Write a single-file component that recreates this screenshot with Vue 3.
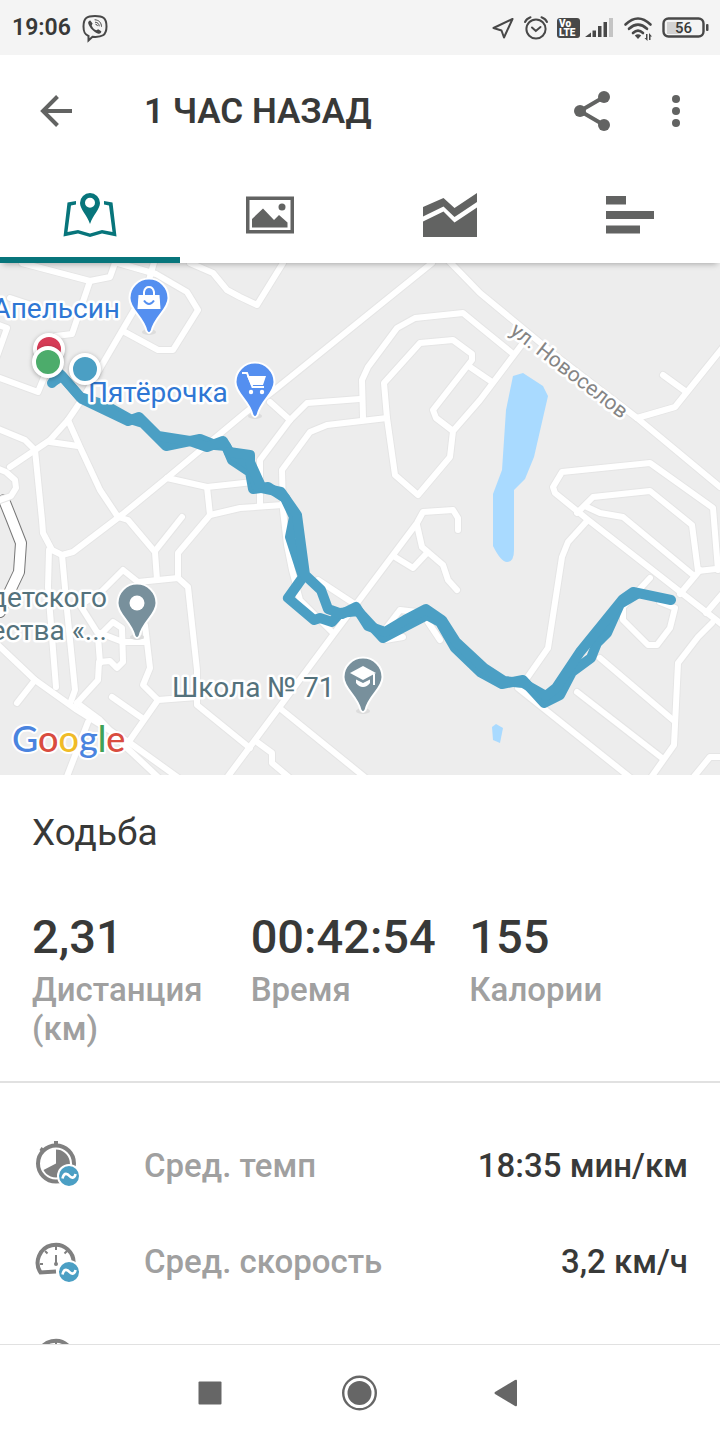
<template>
    <div class="workout">
        <div class="status">
            <div class="status__left">
                <span class="status__time">19:06</span>
                <svg class="status__icon" width="28" height="28" viewBox="0 0 28 28">
                    <path class="line" stroke-width="2" d="M14 2C6 2 2.500 4 2.500 12.500C2.500 18 3.500 20.500 7.500 22V26.500L11.500 22.800C21 23.500 25.500 21.500 25.500 12.500C25.500 4 22 2 14 2Z" />
                    <path class="fill" d="M9.300 6.500L11.600 9.600L10.700 11.600C11.600 14 13 15.300 15.300 16.300L17.200 15.200L20.300 17.300C20.300 19 19 20.200 17.300 19.700C12.500 18 8.600 14 7.200 9.300C6.900 7.900 8 6.700 9.300 6.500Z" />
                    <path class="line" stroke-width="1" d="M14 5.800C18 6 20.300 8.500 20.500 12.300M14.400 8.200C16.800 8.400 18 9.800 18.200 11.900M14.800 10.200Q16.200 10.300 16.400 11.700" />
                </svg>
            </div>
            <div class="status__right">
                <svg class="status__icon" width="24" height="28" viewBox="0 0 24 28">
                    <path class="line" stroke-width="2" stroke-linejoin="round" d="M20.500 5L1.500 14L9.500 16.500L12 23.500Z" />
                </svg>
                <svg class="status__icon" width="28" height="28" viewBox="0 0 28 28">
                    <circle class="line" stroke-width="2" cx="14" cy="15" r="9.600" />
                    <path class="line" stroke-width="2" d="M3 8Q4.500 4.500 8.500 3.200M25 8Q23.500 4.500 19.500 3.200M10 13.500L13.800 17L18.500 13" />
                </svg>
                <svg class="status__icon" width="24" height="28" viewBox="0 0 24 28">
                    <rect class="fill" x="1" y="4" width="23" height="20" rx="3" />
                    <text class="volte" x="3" y="13">Vo</text>
                    <text class="volte" x="3" y="22">LTE</text>
                </svg>
                <svg class="status__icon" width="32" height="28" viewBox="0 0 32 28">
                    <path class="fill" d="M-1 23L5 18.500V23ZM6.500 16.500H10V23H6.500ZM12 12H15.500V23H12ZM17.500 8H21V23H17.500Z" />
                    <rect x="23" y="4" width="4" height="19" fill="#c4c4c4" />
                </svg>
                <svg class="status__icon" width="32" height="28" viewBox="0 0 32 28">
                    <path class="line" stroke-width="2.600" d="M1.500 10.500Q14 -1.500 26.500 10.500M5 14.800Q14 6.600 23 14.800M9 19Q14 14.300 19 19" />
                    <path class="fill" d="M10.800 21.500Q14 18.800 17.200 21.500L14 25ZM22 20H23.500V27L20.500 24H22ZM25 19L28 22.500H26.500V26H25Z" />
                </svg>
                <svg class="status__icon" width="48" height="28" viewBox="0 0 48 28">
                    <rect x="5" y="8" width="14" height="12" fill="#d2d2d2" />
                    <rect class="line" stroke-width="2.400" x="1.500" y="4.500" width="40" height="18" rx="5" />
                    <rect class="fill" x="44" y="10" width="2.500" height="7" rx="1" />
                    <text class="charge" x="21.500" y="19">56</text>
                </svg>
            </div>
        </div>

        <header class="header">
            <button class="icon-button" aria-label="Назад">
                <svg width="48" height="48" viewBox="0 0 48 48">
                    <path d="M40 24H11M25.500 9.500L11 24L25.500 38.500" fill="none" stroke="#626362" stroke-width="4" />
                </svg>
            </button>
            <h1 class="header__title">1 ЧАС НАЗАД</h1>
            <button class="icon-button" aria-label="Поделиться">
                <svg width="48" height="48" viewBox="0 0 48 48">
                    <path d="M36 10L12 24L36 38" fill="none" stroke="#626362" stroke-width="4" />
                    <g fill="#626362">
                        <circle cx="12" cy="24" r="6" />
                        <circle cx="36" cy="10" r="6" />
                        <circle cx="36" cy="38" r="6" />
                    </g>
                </svg>
            </button>
            <button class="icon-button" aria-label="Меню">
                <svg width="48" height="48" viewBox="0 0 48 48" fill="#626362">
                    <circle cx="24" cy="12" r="4" />
                    <circle cx="24" cy="24" r="4" />
                    <circle cx="24" cy="36" r="4" />
                </svg>
            </button>
        </header>

        <nav class="tabs">
            <button
                v-for="tab in tabs"
                :key="tab.id"
                class="tabs__item"
                :class="{ 'tabs__item--active': tab.id === activeTab }"
                :aria-label="tab.label"
                @click="activeTab = tab.id"
            >
                <svg width="56" height="48" viewBox="0 0 56 48" fill="currentColor">
                    <path v-for="d in tab.paths" :key="d" :d="d" fill-rule="evenodd" />
                </svg>
            </button>
        </nav>

        <main class="content">
            <svg class="map" viewBox="0 263 720 512">
                <rect class="map__land" x="0" y="263" width="720" height="512" />
                <path class="map__highway-edge" :d="highway" />
                <path class="map__highway" :d="highway" />
                <polyline v-for="road in roads" :key="'edge' + road" class="map__road-edge" :points="road" />
                <polyline v-for="road in roads" :key="road" class="map__road" :points="road" />
                <g class="map__water">
                    <path d="M513 376L523 373L543 386L548 396L534 457L525 479L514 490V550Q514 562 507 562Q501 562 493 546V494L502 470L506 410Z" />
                    <path d="M492 727L496 724L503 728L500 743L493 740Z" />
                </g>
                <polyline v-for="line in route" :key="line" class="map__route" :points="line" />

                <text class="map__street" transform="translate(509 333) rotate(37.500)">ул. Новоселов</text>
                <text class="map__label map__label--shop" x="120" y="318" text-anchor="end">Апельсин</text>
                <text class="map__label map__label--shop" x="88" y="402">Пятёрочка</text>
                <text class="map__label" x="107" y="607" text-anchor="end">детского</text>
                <text class="map__label" x="107" y="640" text-anchor="end">ества «...</text>
                <text class="map__label" x="172" y="697">Школа № 71</text>

                <g v-for="pin in pins" :key="pin.icon" :transform="`translate(${pin.x} ${pin.y})`">
                    <ellipse cx="0" cy="34" rx="7" ry="3" fill="#dcdcdc" />
                    <path class="map__pin" :fill="pin.color" d="M0 -19.500A19.500 19.500 0 0 0 -19.500 0C-19.500 12 -6 18 -2.500 33Q0 37 2.500 33C6 18 19.500 12 19.500 0A19.500 19.500 0 0 0 0 -19.500Z" />
                    <g v-if="pin.icon === 'bag'">
                        <path d="M-10.500 -3H10.500L11.500 11H-11.500Z" fill="#fff" />
                        <path d="M-5 -2V-6Q-4 -11 0 -11Q4 -11 5 -6V-2" fill="none" stroke="#fff" stroke-width="2" />
                        <path d="M-5 2.500Q0 9.500 5 2.500" fill="none" stroke="#548ff0" stroke-width="2" />
                    </g>
                    <g v-else-if="pin.icon === 'cart'">
                        <path d="M-13 -9H-8L-2.500 5H9" fill="none" stroke="#fff" stroke-width="2" />
                        <path d="M-8 -6H11L8 3H-4Z" fill="#fff" />
                        <circle cx="-4" cy="10" r="2.200" fill="#fff" />
                        <circle cx="7" cy="10" r="2.200" fill="#fff" />
                    </g>
                    <circle v-else-if="pin.icon === 'dot'" cx="0" cy="0" r="7.500" fill="#fff" />
                    <g v-else fill="#fff">
                        <path d="M0 -11L13 -4L0 3L-13 -4Z" />
                        <path d="M-7 2.500L0 6L7 2.500V6Q4 10 0 10Q-4 10 -7 6ZM10 -3H12V8H10Z" />
                    </g>
                </g>

                <circle
                    v-for="marker in markers"
                    :key="marker.color"
                    class="map__marker"
                    :cx="marker.x"
                    :cy="marker.y"
                    r="14"
                    :fill="marker.color"
                />

                <text class="map__logo" x="12" y="752"><tspan fill="#4a84df">G</tspan><tspan fill="#d94c40">o</tspan><tspan fill="#f0bb27">o</tspan><tspan fill="#4a84df">g</tspan><tspan fill="#3fa257">l</tspan><tspan fill="#d94c40">e</tspan></text>
            </svg>

            <h2 class="activity">Ходьба</h2>

            <dl class="stats">
                <div v-for="stat in stats" :key="stat.label" class="stats__item">
                    <dd class="stats__value">{{ stat.value }}</dd>
                    <dt class="stats__label">{{ stat.label }}</dt>
                </div>
            </dl>

            <ul class="details">
                <li v-for="(row, index) in details" :key="index" class="details__row">
                    <svg class="details__icon" width="48" height="48" viewBox="0 0 48 48">
                        <g v-if="row.icon === 'pace'">
                            <circle cx="24" cy="22.500" r="18" class="details__stroke" />
                            <path d="M24 8.500A14 14 0 1 1 11.500 29L24 22.500Z" fill="#808080" />
                            <path d="M22 0H26V5H22ZM7.500 9L9.500 6L13.500 9L10.500 12Z" fill="#808080" />
                        </g>
                        <g v-else>
                            <path class="details__stroke" d="M41.500 28A18 18 0 1 0 8.500 35.500L24 34.500" />
                            <path class="details__tick" d="M24 9V13M13 14L15.500 16.500M35 14L32.500 16.500M8 27H11" />
                            <path class="details__needle" d="M24 18V27" />
                            <circle cx="24" cy="27" r="2" fill="#808080" />
                        </g>
                        <circle cx="37" cy="35" r="11" fill="#4b9fc4" stroke="#fff" stroke-width="2" />
                        <path d="M30.500 37.500C32 30.500 36 33 37.500 35C39 37 42.500 38 43.500 33" fill="none" stroke="#fff" stroke-width="2.600" />
                    </svg>
                    <span class="details__label">{{ row.label }}</span>
                    <span class="details__value">{{ row.value }}</span>
                </li>
            </ul>
        </main>

        <div class="system-nav">
            <button class="system-nav__button" aria-label="Недавние">
                <svg width="48" height="48" viewBox="0 0 48 48"><rect x="12.500" y="12.500" width="23" height="23" rx="1" /></svg>
            </button>
            <button class="system-nav__button" aria-label="Домой">
                <svg width="48" height="48" viewBox="0 0 48 48">
                    <circle cx="23.500" cy="24" r="16.300" fill="none" stroke="#666" stroke-width="2.400" />
                    <circle cx="23.500" cy="24" r="12" />
                </svg>
            </button>
            <button class="system-nav__button" aria-label="Назад">
                <svg width="48" height="48" viewBox="0 0 48 48"><path d="M9 23Q8 24 9 25L29 37Q31 38 31 36V12Q31 10 29 11Z" /></svg>
            </button>
        </div>
    </div>
</template>

<script setup>
import { ref } from 'vue';

const activeTab = ref('map');

const tabs = [
    {
        id: 'map',
        label: 'Карта',
        paths: [
            'M28 2A10 10 0 0 0 18 12C18 18 25 24 28 33C31 24 38 18 38 12A10 10 0 0 0 28 2ZM28 6.800A5 5 0 1 1 28 16.800A5 5 0 1 1 28 6.800Z',
            'M14 10L5.500 11.500L1.500 45.500L16 42.500L28 46L40 42.500L54.500 45.500L50.500 11.500L42 10V13.500L47 14.500L50.500 41L40 39L28 42.500L16 39L5.500 41L9 14.500L14 13.500Z',
        ],
    },
    {
        id: 'photo',
        label: 'Фото',
        paths: [
            'M4 5.500H52V42.500H4ZM7.500 9V39H48.500V9Z',
            'M10 28L21 17.500L32 29L37 24L45.500 31.500V36.500H10Z',
            'M40 12.500A3.500 3.500 0 1 1 40 19.500A3.500 3.500 0 1 1 40 12.500Z',
        ],
    },
    {
        id: 'chart',
        label: 'Графики',
        paths: [
            'M1 16L21.500 7L32.500 17L55 2V11L32.500 26L21.500 15.500L1 25.500Z',
            'M1 30.500L21.500 20.500L32.500 31.500L55 16.500V46H1Z',
        ],
    },
    {
        id: 'laps',
        label: 'Круги',
        paths: ['M4 5H24V13.500H4Z', 'M4 20H52V28H4Z', 'M4 34.500H38V42.500H4Z'],
    },
];

const highway = 'M4 500L12 520L21 543L19 572L0 612';

const roads = [
    '22,263 90,281 110,277 115,263',
    '118,263 156,274 187,292 198,310 173,350 158,350 123,331',
    '90,281 72,334 56,336',
    '155,259 149,280',
    '140,300 102,365 85,395 68,420 50,440 10,467',
    '190,263 213,273 227,290 240,297 257,305 283,263',
    '0,378 38,392 47,370',
    '-4,324 7,328 -3,356',
    '10,298 40,308',
    '-4,428 25,440 35,450 42,520 43,533 52,550 62,555 73,552 123,514 167,478 245,413 277,388 432,263',
    '68,420 80,447 100,490 118,517 128,520 155,552 157,580',
    '50,442 78,446',
    '155,551 182,517',
    '167,478 207,487 253,482',
    '178,578 178,553 210,515 207,487',
    '210,515 240,508 283,505',
    '260,505 260,460 290,420 307,403 360,399',
    '270,402 290,420',
    '333,633 300,600 292,570 287,545 283,510 282,470 310,432 327,425 387,418',
    '363,418 362,380 368,367 397,328 415,318 463,313 480,327 512,353',
    '453,431 436,418 433,410 472,360 472,354 453,340 420,343 384,383 387,418 395,475 418,495 450,457 453,431 480,400 523,343',
    '470,367 492,382',
    '447,259 480,293 560,359 637,418 720,487',
    '637,418 675,407 724,346',
    '663,375 685,391',
    '718,570 713,508 650,463 562,472 553,487 555,493 587,519 724,626',
    '577,513 593,497 650,491 692,525 698,571 724,568',
    '587,507 600,513 623,517 693,575',
    '700,570 680,594',
    '706,613 724,592',
    '587,521 568,542 562,557 548,648 527,678',
    '650,578 623,607 623,620 648,645 657,645 670,628 675,608 660,602',
    '712,623 698,637 678,663 674,745 650,779',
    '600,658 673,720',
    '577,692 662,758',
    '518,688 632,779',
    '692,779 710,757 724,757',
    '458,530 458,518 453,510 423,512 417,523 333,635 226,779',
    '417,525 422,547 443,565 448,580 457,590',
    '395,557 413,568 427,553',
    '318,580 353,603',
    '387,627 400,610 417,612',
    '428,622 440,640',
    '385,640 403,637',
    '282,710 367,779',
    '257,742 272,753 272,763 291,779',
    '138,582 178,578 188,587 197,670 197,705 250,748',
    '138,582 123,570 100,593 80,605 97,632 123,642 145,642',
    '49,550 48,587 56,687',
    '62,555 67,610 75,690 70,704',
    '-4,643 35,680 77,710 130,743 180,779',
    '77,703 100,720 127,748 160,779',
    '35,680 17,703',
    '88,722 66,779',
    '98,637 113,622 122,628 123,662 117,668 110,661 99,662 98,680 77,703',
    '98,637 100,663',
    '145,625 150,668 143,685 158,700 197,697',
    '158,700 130,740',
    '112,697 142,718',
    '-4,468 6,472 15,480 16,488 11,496 0,500',
];

const route = [
    '52,383 60,374 80,397 105,405 130,419 143,423 166,446 200,439 215,445 226,446 232,460 250,472 253,489 268,487 285,498 294,517 290,537 303,577 288,598 314,620 320,618 332,622 340,613 358,611 383,638 402,628 427,615 440,622 455,648 480,672 502,684 523,680 544,703 560,695 572,672 591,658 597,643 607,633 620,604 637,594',
    '54,381 62,376 82,399 128,421 139,417 158,436 190,441 207,447 223,441 230,453 251,466 257,487 281,492 297,515 305,575 321,590 328,609 342,614 356,607 368,626 385,632 405,620 426,609 442,620 456,642 484,668 504,681 523,683 546,696 556,688 580,652 623,599 633,592 671,600',
    '229,452 250,455 250,462 260,484',
];

const pins = [
    { icon: 'bag', x: 149, y: 298, color: '#548ff0' },
    { icon: 'cart', x: 255, y: 382, color: '#548ff0' },
    { icon: 'dot', x: 137, y: 603, color: '#78909c' },
    { icon: 'school', x: 363, y: 677, color: '#78909c' },
];

const markers = [
    { x: 49, y: 349, color: '#d63b56' },
    { x: 48, y: 362, color: '#4cac6b' },
    { x: 85, y: 369, color: '#4b9fc4' },
];

const stats = [
    { value: '2,31', label: 'Дистанция (км)' },
    { value: '00:42:54', label: 'Время' },
    { value: '155', label: 'Калории' },
];

const details = [
    { icon: 'pace', label: 'Сред. темп', value: '18:35 мин/км' },
    { icon: 'speed', label: 'Сред. скорость', value: '3,2 км/ч' },
    { icon: 'speed', label: '', value: '' },
];
</script>

<style>
body {
    margin: 0;
    background: #fff;
}
</style>

<style scoped>
.workout {
    display: flex;
    flex-direction: column;
    height: 100vh;
    font-family: Roboto, "Noto Sans", sans-serif;
    color: #383938;
    background: #fff;
}

button {
    padding: 0;
    border: 0;
    background: none;
    cursor: pointer;
}

svg {
    display: block;
}

.status {
    display: flex;
    justify-content: space-between;
    align-items: center;
    flex: none;
    height: 55px;
    padding: 0 10px 0 12px;
    background: #f4f4f4;
}

.status__left,
.status__right {
    display: flex;
    align-items: center;
    gap: 10px;
}

.status__right {
    gap: 6px;
}

.status__icon {
    overflow: visible;
}

.status__time {
    font-size: 23px;
    font-weight: 600;
}

.line {
    fill: none;
    stroke: #484848;
    stroke-linecap: round;
}

.fill {
    fill: #484848;
}

.volte {
    font-size: 10px;
    font-weight: 900;
    fill: #fff;
}

.charge {
    font-size: 15px;
    font-weight: 500;
    text-anchor: middle;
    fill: #383938;
}

.header {
    display: flex;
    align-items: center;
    flex: none;
    height: 112px;
    padding: 0 20px 0 32px;
}

.header__title {
    flex: 1;
    margin: 0 0 0 64px;
    font-size: 35px;
    font-weight: 600;
}

.icon-button + .icon-button {
    margin-left: 36px;
}

.tabs {
    position: relative;
    z-index: 1;
    display: flex;
    flex: none;
    height: 96px;
    background: #fff;
    box-shadow: 0 4px 6px -3px rgba(0, 0, 0, 0.3);
}

.tabs__item {
    display: flex;
    flex: 1;
    justify-content: center;
    align-items: center;
    box-sizing: border-box;
    padding-top: 6px;
    border-bottom: 6px solid transparent;
    color: #626362;
}

.tabs__item--active {
    border-bottom-color: #07757b;
    color: #07757b;
}

.content {
    flex: 1;
    min-height: 0;
    overflow: hidden;
}

.map {
    width: 100%;
    height: auto;
}

.map__land {
    fill: #ededed;
}

.map__road,
.map__road-edge,
.map__highway,
.map__highway-edge {
    fill: none;
    stroke: #fff;
    stroke-width: 6;
    stroke-linecap: round;
    stroke-linejoin: round;
}

.map__road-edge {
    stroke: #e5e5e5;
    stroke-width: 8;
}

.map__highway {
    stroke-width: 10;
}

.map__highway-edge {
    stroke: #777;
    stroke-width: 12;
}

.map__water {
    fill: #a9daff;
}

.map__route {
    fill: none;
    stroke: #4b9fc4;
    stroke-width: 10;
    stroke-linecap: round;
    stroke-linejoin: round;
}

.map__label,
.map__street {
    font-size: 28px;
    fill: #54727c;
    stroke: #fff;
    stroke-width: 5;
    stroke-linejoin: round;
    paint-order: stroke;
}

.map__label--shop {
    fill: #2f77d4;
}

.map__street {
    font-size: 21px;
    fill: #858585;
}

.map__pin {
    stroke: #fff;
    stroke-width: 2;
}

.map__marker {
    stroke: #fff;
    stroke-width: 4;
    filter: drop-shadow(0 1px 2px rgba(0, 0, 0, 0.3));
}

.map__logo {
    font-family: Lato, sans-serif;
    font-size: 36px;
    font-weight: 500;
    stroke: #fff;
    stroke-width: 4;
    stroke-linejoin: round;
    paint-order: stroke;
}

.activity {
    margin: 36px 32px 0;
    font-size: 37px;
    font-weight: 400;
    line-height: 44px;
}

.stats {
    display: grid;
    grid-template-columns: repeat(3, 1fr);
    margin: 0;
    padding: 52px 32px 33px;
    border-bottom: 2px solid #e1e1e1;
}

.stats__value {
    margin: 0;
    font-size: 47px;
    font-weight: 500;
    line-height: 60px;
}

.stats__label {
    margin-top: 3px;
    font-size: 33px;
    font-weight: 500;
    line-height: 39px;
    color: #a0a0a0;
}

.details {
    margin: 0;
    padding: 34px 32px 0;
    list-style: none;
}

.details__row {
    display: flex;
    align-items: center;
    height: 96px;
    font-size: 33px;
    font-weight: 500;
}

.details__icon {
    flex: none;
    margin-right: 64px;
}

.details__stroke {
    fill: none;
    stroke: #808080;
    stroke-width: 4;
}

.details__tick,
.details__needle {
    fill: none;
    stroke: #808080;
    stroke-width: 2;
}

.details__label {
    flex: 1;
    color: #a0a0a0;
}

.system-nav {
    display: flex;
    justify-content: center;
    flex: none;
    height: 95px;
    border-top: 1px solid #e1e1e1;
    background: #fff;
    fill: #666;
}

.system-nav__button {
    display: flex;
    justify-content: center;
    align-items: center;
    width: 150px;
}
</style>
